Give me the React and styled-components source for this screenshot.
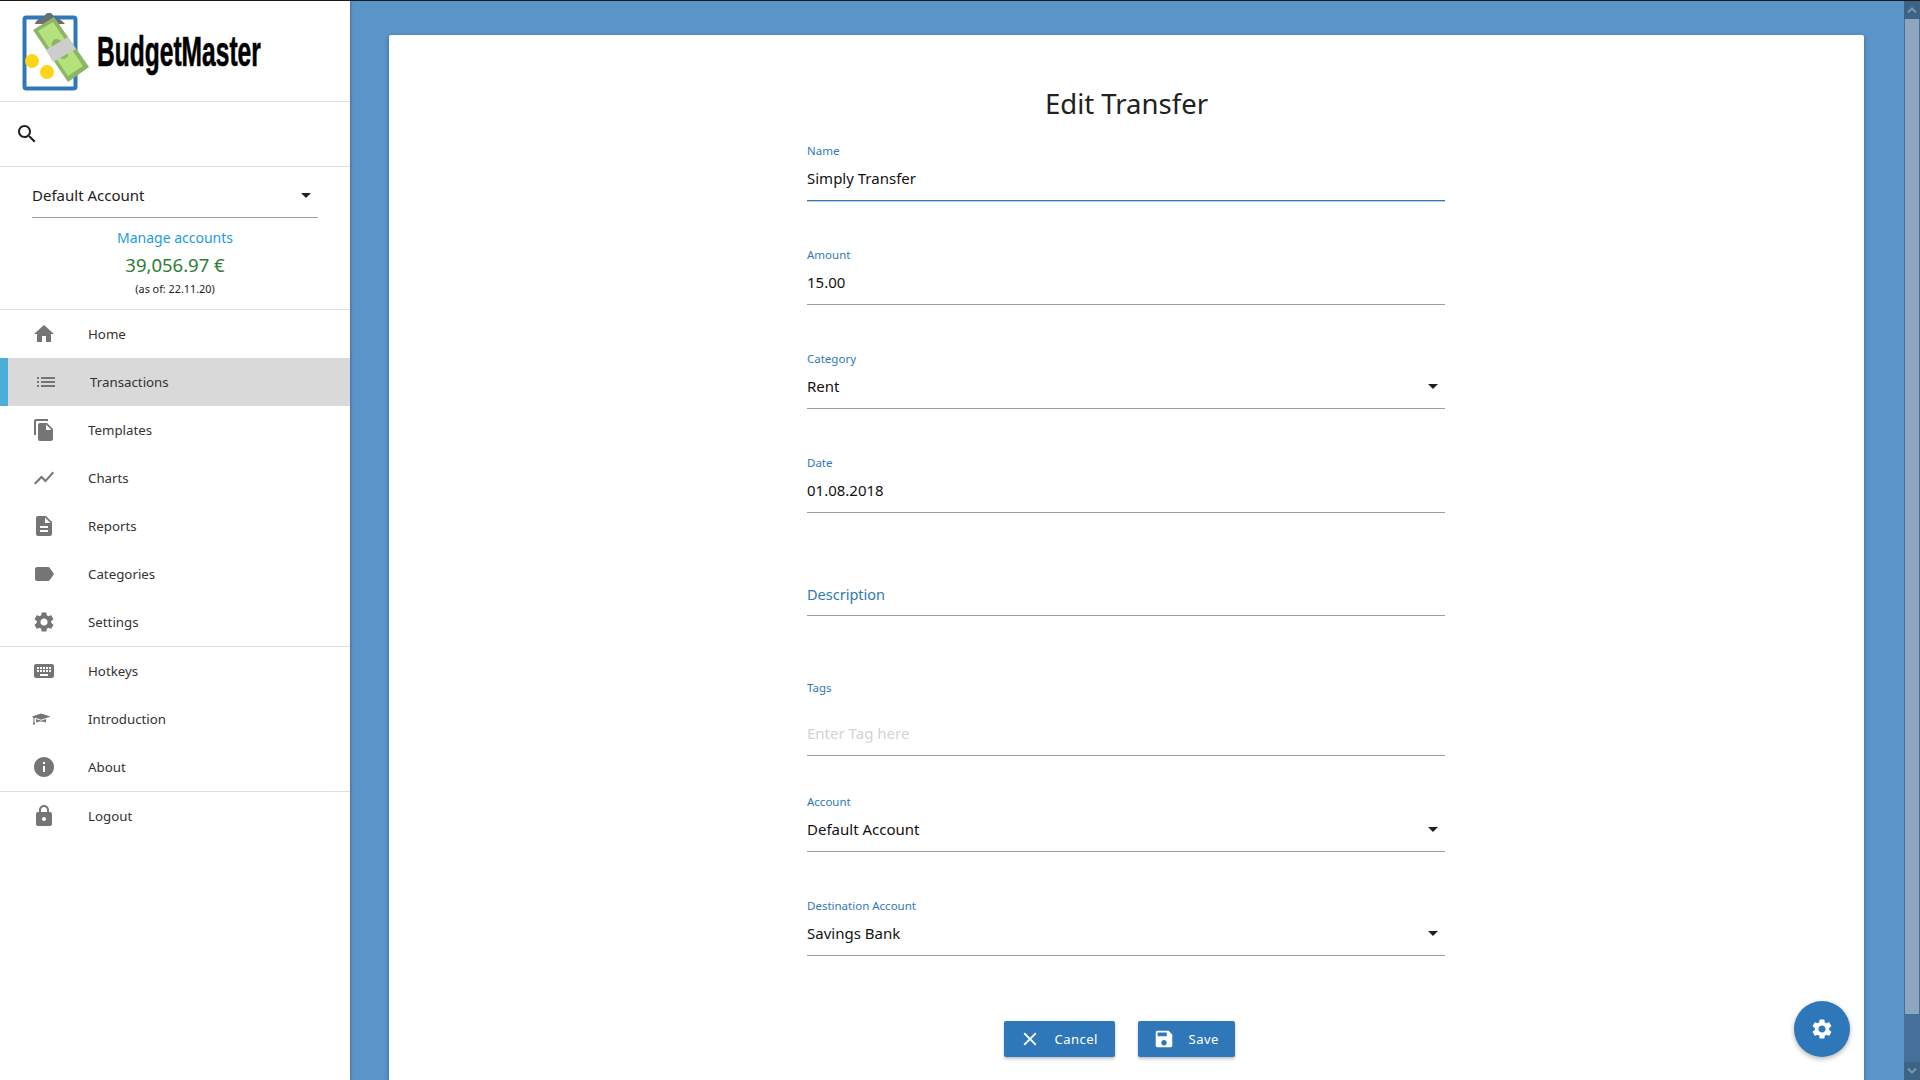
import React from "react";
import styled, { createGlobalStyle } from "styled-components";

const ICONS = {
  home: "M10 20v-6h4v6h5v-8h3L12 3 2 12h3v8z",
  list: "M3 13h2v-2H3v2zm0 4h2v-2H3v2zm0-8h2V7H3v2zm4 4h14v-2H7v2zm0 4h14v-2H7v2zM7 7v2h14V7H7z",
  copy: "M16 1H4c-1.1 0-2 .9-2 2v14h2V3h12V1zm-1 4l6 6v10c0 1.1-.9 2-2 2H7.99C6.89 23 6 22.1 6 21l.01-14c0-1.1.89-2 1.99-2h7zm-1 7h5.5L14 6.5V12z",
  chart: "M3.5 18.49l6-6.01 4 4L22 6.92l-1.41-1.41-7.09 7.97-4-4L2 16.99z",
  report: "M14 2H6c-1.1 0-1.99.9-1.99 2L4 20c0 1.1.89 2 1.99 2H18c1.1 0 2-.9 2-2V8l-6-6zm2 16H8v-2h8v2zm0-4H8v-2h8v2zm-3-5V3.5L18.5 9H13z",
  label: "M17.63 5.84C17.27 5.33 16.67 5 16 5L5 5.01C3.9 5.01 3 5.9 3 7v10c0 1.1.9 1.99 2 1.99L16 19c.67 0 1.27-.33 1.63-.84L22 12l-4.37-6.16z",
  settings: "M19.14 12.94c.04-.3.06-.61.06-.94 0-.32-.02-.64-.07-.94l2.03-1.58c.18-.14.23-.41.12-.61l-1.92-3.32c-.12-.22-.37-.29-.59-.22l-2.39.96c-.5-.38-1.03-.7-1.62-.94l-.36-2.54c-.04-.24-.24-.41-.48-.41h-3.84c-.24 0-.43.17-.47.41l-.36 2.54c-.59.24-1.13.57-1.62.94l-2.39-.96c-.22-.08-.47 0-.59.22L2.74 8.87c-.12.21-.08.47.12.61l2.03 1.58c-.05.3-.09.63-.09.94s.02.64.07.94l-2.03 1.58c-.18.14-.23.41-.12.61l1.92 3.32c.12.22.37.29.59.22l2.39-.96c.5.38 1.03.7 1.62.94l.36 2.54c.05.24.24.41.48.41h3.84c.24 0 .44-.17.47-.41l.36-2.54c.59-.24 1.13-.56 1.62-.94l2.39.96c.22.08.47 0 .59-.22l1.92-3.32c.12-.22.07-.47-.12-.61l-2.01-1.58zM12 15.6c-1.98 0-3.6-1.62-3.6-3.6s1.62-3.6 3.6-3.6 3.6 1.62 3.6 3.6-1.62 3.6-3.6 3.6z",
  keyboard: "M20 5H4c-1.1 0-1.99.9-1.99 2L2 17c0 1.1.9 2 2 2h16c1.1 0 2-.9 2-2V7c0-1.1-.9-2-2-2zm-9 3h2v2h-2V8zm0 3h2v2h-2v-2zM8 8h2v2H8V8zm0 3h2v2H8v-2zm-1 2H5v-2h2v2zm0-3H5V8h2v2zm9 7H8v-2h8v2zm0-4h-2v-2h2v2zm0-3h-2V8h2v2zm3 3h-2v-2h2v2zm0-3h-2V8h2v2z",
  school: "M9 6.500L18.500 9.500 9 12.700 3.500 10.800l-1 .4v3.300l.7 3H.8l.7-3v-3.700L0 9.500zM4 12l5 1.800 5-1.800v3.500c-3-1.300-7-1.300-10 0z",
  info: "M12 2C6.48 2 2 6.48 2 12s4.48 10 10 10 10-4.48 10-10S17.52 2 12 2zm1 15h-2v-6h2v6zm0-8h-2V7h2v2z",
  lock: "M18 8h-1V6c0-2.76-2.24-5-5-5S7 3.24 7 6v2H6c-1.1 0-2 .9-2 2v10c0 1.1.9 2 2 2h12c1.1 0 2-.9 2-2V10c0-1.1-.9-2-2-2zm-6 9c-1.1 0-2-.9-2-2s.9-2 2-2 2 .9 2 2-.9 2-2 2zm3.1-9H8.9V6c0-1.71 1.39-3.1 3.1-3.1 1.71 0 3.1 1.39 3.1 3.1v2z",
  search: "M15.5 14h-.79l-.28-.27C15.41 12.59 16 11.11 16 9.5 16 5.91 13.09 3 9.5 3S3 5.91 3 9.5 5.91 16 9.5 16c1.61 0 3.09-.59 4.23-1.57l.27.28v.79l5 4.99L20.49 19l-4.99-5zm-6 0C7.01 14 5 11.99 5 9.5S7.01 5 9.5 5 14 7.01 14 9.5 11.99 14 9.5 14z",
  save: "M17 3H5c-1.11 0-2 .9-2 2v14c0 1.1.89 2 2 2h14c1.1 0 2-.9 2-2V7l-4-4zm-5 16c-1.66 0-3-1.34-3-3s1.34-3 3-3 3 1.34 3 3-1.34 3-3 3zm3-10H5V5h10v4z",
  clear: "M19 6.41L17.59 5 12 10.59 6.41 5 5 6.41 10.59 12 5 17.59 6.41 19 12 13.41 17.59 19 19 17.59 13.41 12z",
};

const GlobalStyle = createGlobalStyle`
  html, body {
    margin: 0;
    height: 100%;
    overflow: hidden;
  }
  body {
    font-family: "Noto Sans", "Open Sans", sans-serif;
    color: #212121;
  }
`;

const Page = styled.div`
  display: flex;
  height: 1080px;
  border-top: 1px solid #1a1a1a;
  box-sizing: border-box;
  background: #5a94c9;
  overflow: hidden;
`;

const Sidebar = styled.aside`
  width: 350px;
  flex: none;
  background: #fff;
  display: flex;
  flex-direction: column;
  box-shadow: 1px 0 2px rgba(0, 0, 0, 0.25);
`;

const LogoRow = styled.div`
  height: 100px;
  border-bottom: 1px solid #e0e0e0;
  display: flex;
  align-items: center;
  padding-left: 20px;
  overflow: hidden;
`;

const LogoMark = styled.svg`
  flex: none;
`;

const LogoName = styled.span`
  font-family: "Liberation Sans", sans-serif;
  font-weight: 700;
  font-size: 42px;
  line-height: 1;
  color: #000;
  -webkit-text-stroke: 0.6px #000;
  transform: scaleX(0.585);
  transform-origin: left center;
  margin-left: 5px;
  margin-top: 2px;
  white-space: nowrap;
`;

const SearchRow = styled.div`
  height: 64px;
  border-bottom: 1px solid #e0e0e0;
  display: flex;
  align-items: center;
  padding-left: 15px;
`;

const AccountBox = styled.div`
  height: 142px;
  border-bottom: 1px solid #e0e0e0;
  display: flex;
  flex-direction: column;
  align-items: center;
`;

const AccountSelect = styled.div`
  width: 286px;
  height: 51px;
  box-sizing: border-box;
  border-bottom: 1px solid #9e9e9e;
  display: flex;
  align-items: center;
  justify-content: space-between;
  font-size: 15px;
  padding: 6px 7px 0 0;
`;

const Caret = styled.span`
  width: 0;
  height: 0;
  border-left: 5px solid transparent;
  border-right: 5px solid transparent;
  border-top: 5px solid #212121;
`;

const ManageLink = styled.a`
  color: #1a9be6;
  font-size: 14px;
  line-height: 20px;
  margin-top: 10px;
`;

const Balance = styled.div`
  color: #2e7d32;
  font-size: 18.500px;
  line-height: 24px;
  margin-top: 5px;
`;

const AsOf = styled.div`
  font-size: 10.800px;
  line-height: 14px;
  margin-top: 5px;
`;

const NavGroup = styled.nav`
  display: flex;
  flex-direction: column;
  border-bottom: ${(p) => (p.$last ? "none" : "1px solid #e0e0e0")};
`;

const NavItem = styled.a`
  height: 48px;
  flex: none;
  display: flex;
  align-items: center;
  gap: 32px;
  font-size: 13.300px;
  color: #333;
  box-sizing: border-box;
  padding-left: ${(p) => (p.$active ? "26px" : "32px")};
  background: ${(p) => (p.$active ? "#d9d9d9" : "transparent")};
  border-left: ${(p) => (p.$active ? "8px solid #4baed8" : "none")};
`;

const Icon = styled.svg`
  width: ${(p) => p.$size || 24}px;
  height: ${(p) => p.$size || 24}px;
  flex: none;
  fill: ${(p) => p.$color || "#757575"};
`;

const Main = styled.main`
  flex: 1;
  min-width: 0;
  padding: 34px 40px 0 39px;
  display: flex;
`;

const Card = styled.section`
  flex: 1;
  background: #fff;
  border-radius: 2px 2px 0 0;
  box-shadow: 0 2px 5px rgba(0, 0, 0, 0.3);
  display: flex;
  flex-direction: column;
  align-items: center;
  overflow: hidden;
`;

const Title = styled.h1`
  margin: 49px 0 18px;
  font-size: 27.500px;
  line-height: 40px;
  font-weight: 400;
  color: #212121;
`;

const Form = styled.form`
  width: 638px;
  margin-right: 1px;
  display: flex;
  flex-direction: column;
`;

const Field = styled.div`
  display: flex;
  flex-direction: column;
  height: ${(p) => p.$height || 59}px;
  margin-bottom: ${(p) => p.$gap ?? 45}px;
  border-bottom: 1px solid ${(p) => (p.$focused ? "#2e78b9" : "#9e9e9e")};
  box-shadow: ${(p) => (p.$focused ? "0 1px 0 #b9d3ea" : "none")};
  box-sizing: border-box;
`;

const FieldLabel = styled.label`
  font-size: 11.500px;
  line-height: 16px;
  margin-top: 1px;
  color: #2e78b9;
`;

const FieldValue = styled.div`
  display: flex;
  align-items: center;
  justify-content: space-between;
  font-size: 15px;
  line-height: 24px;
  margin-top: 7px;
  padding-right: 7px;
  color: #111;
`;

const FloatingLabel = styled.div`
  font-size: 14.500px;
  line-height: 24px;
  color: #2e78b9;
  margin-top: 24px;
`;

const Placeholder = styled.div`
  font-size: 15px;
  line-height: 24px;
  color: #d4d4d4;
  margin-top: 25px;
`;

const Actions = styled.div`
  display: flex;
  gap: 23px;
  justify-content: center;
  margin-top: 20px;
  padding-right: 14px;
`;

const ActionButton = styled.button`
  height: 36px;
  width: ${(p) => p.$width}px;
  border: 0;
  border-radius: 2px;
  background: #2e78b9;
  color: #fff;
  font-family: inherit;
  font-size: 13px;
  letter-spacing: 0.5px;
  display: flex;
  align-items: center;
  gap: 14px;
  padding: 0 0 0 15px;
  box-shadow: 0 2px 3px rgba(0, 0, 0, 0.25);
`;

const Fab = styled.button`
  position: absolute;
  left: 1794px;
  top: 1001px;
  width: 56px;
  height: 56px;
  border: 0;
  border-radius: 50%;
  background: #2e78b9;
  display: flex;
  align-items: center;
  justify-content: center;
  box-shadow: 0 2px 5px rgba(0, 0, 0, 0.3);
`;

const Scrollbar = styled.div`
  width: 16px;
  flex: none;
  background: #46709a;
  display: flex;
  flex-direction: column;
  justify-content: space-between;
`;

const ScrollTop = styled.div`
  display: flex;
  flex-direction: column;
`;

const ScrollButton = styled.div`
  height: 18px;
  background: #3d6485;
  display: flex;
  align-items: center;
  justify-content: center;
`;

const ScrollThumb = styled.div`
  height: 995px;
  margin: 0 1px;
  background: #8fa6bf;
`;

const Chevron = ({ up }) => (
  <svg width="10" height="6" viewBox="0 0 10 6" fill="none" stroke="#7b95ad" strokeWidth="2">
    <path d={up ? "M1 5.500L5 1.500L9 5.500" : "M1 .5L5 4.500L9 .5"} />
  </svg>
);

const MaterialIcon = ({ name, size, color }) => (
  <Icon viewBox="0 0 24 24" $size={size} $color={color}>
    <path d={ICONS[name]} />
  </Icon>
);

const Logo = () => (
  <LogoMark width="72" height="84" viewBox="20 9 72 84">
    <rect x="24.500" y="17.500" width="51" height="71" rx="2" fill="#fff" stroke="#2e78b9" strokeWidth="4" />
    <path d="M35 24c1-4 5-6 9-6 1-3 1.500-5 5-5s4 2 5 5c4 0 8 2 11 6z" fill="#6d6d6d" />
    <polygon points="33,30 54,17 89,67 68,82" fill="#8cb567" />
    <polygon points="38,31 53,22 83,66 68,76" fill="#b5e27c" />
    <ellipse cx="60" cy="49" rx="7" ry="11" transform="rotate(-35 60 49)" fill="#8cb567" />
    <polygon points="46,50 68,37 76,49 53,62" fill="#cdcdcd" />
    <circle cx="32" cy="61" r="7" fill="#ffd318" />
    <circle cx="47" cy="72" r="7" fill="#ffd318" />
  </LogoMark>
);

const navTop = [
  ["home", "Home"],
  ["list", "Transactions", true],
  ["copy", "Templates"],
  ["chart", "Charts"],
  ["report", "Reports"],
  ["label", "Categories"],
  ["settings", "Settings"],
];
const navHelp = [
  ["keyboard", "Hotkeys"],
  ["school", "Introduction"],
  ["info", "About"],
];

const NavList = ({ items, last }) => (
  <NavGroup $last={last}>
    {items.map(([icon, text, active]) => (
      <NavItem key={text} $active={active}>
        <MaterialIcon name={icon} />
        {text}
      </NavItem>
    ))}
  </NavGroup>
);

const TextField = ({ label, value, select, focused, gap }) => (
  <Field $focused={focused} $gap={gap}>
    <FieldLabel>{label}</FieldLabel>
    <FieldValue>
      {value}
      {select && <Caret />}
    </FieldValue>
  </Field>
);

export default function App() {
  return (
    <Page>
      <GlobalStyle />
      <Sidebar>
        <LogoRow>
          <Logo />
          <LogoName>BudgetMaster</LogoName>
        </LogoRow>
        <SearchRow>
          <MaterialIcon name="search" color="#212121" />
        </SearchRow>
        <AccountBox>
          <AccountSelect>
            Default Account
            <Caret />
          </AccountSelect>
          <ManageLink>Manage accounts</ManageLink>
          <Balance>39,056.97 €</Balance>
          <AsOf>(as of: 22.11.20)</AsOf>
        </AccountBox>
        <NavList items={navTop} />
        <NavList items={navHelp} />
        <NavList items={[["lock", "Logout"]]} last />
      </Sidebar>
      <Main>
        <Card>
          <Title>Edit Transfer</Title>
          <Form>
            <TextField label="Name" value="Simply Transfer" focused />
            <TextField label="Amount" value="15.00" />
            <TextField label="Category" value="Rent" select />
            <TextField label="Date" value="01.08.2018" />
            <Field $height={58} $gap={63}>
              <FloatingLabel>Description</FloatingLabel>
            </Field>
            <Field $height={77} $gap={37}>
              <FieldLabel>Tags</FieldLabel>
              <Placeholder>Enter Tag here</Placeholder>
            </Field>
            <TextField label="Account" value="Default Account" select />
            <TextField label="Destination Account" value="Savings Bank" select />
            <Actions>
              <ActionButton $width={111} type="button">
                <MaterialIcon name="clear" color="#fff" size={22} />
                Cancel
              </ActionButton>
              <ActionButton $width={97} type="button">
                <MaterialIcon name="save" color="#fff" size={22} />
                Save
              </ActionButton>
            </Actions>
          </Form>
        </Card>
      </Main>
      <Fab type="button" aria-label="Settings">
        <MaterialIcon name="settings" color="#fff" />
      </Fab>
      <Scrollbar>
        <ScrollTop>
          <ScrollButton>
            <Chevron up />
          </ScrollButton>
          <ScrollThumb />
        </ScrollTop>
        <ScrollButton>
          <Chevron />
        </ScrollButton>
      </Scrollbar>
    </Page>
  );
}
